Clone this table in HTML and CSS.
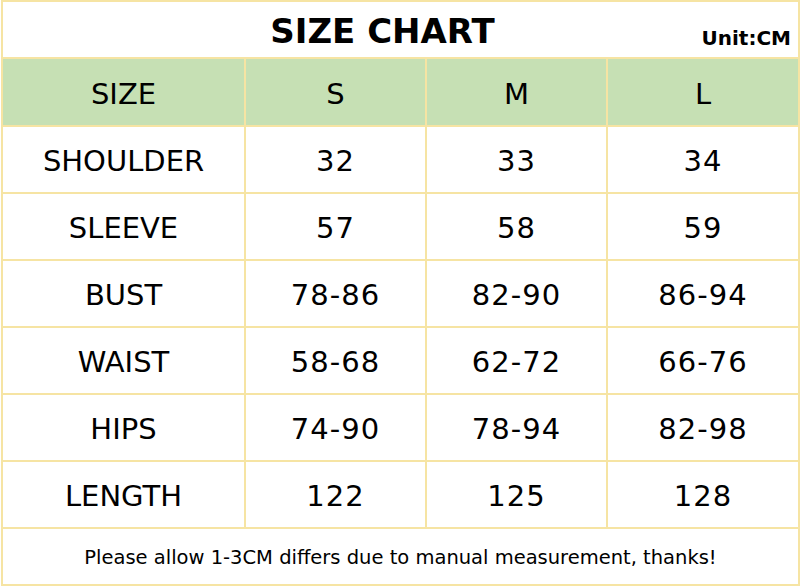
FILE: index.html
```html
<!DOCTYPE html>
<html>
<head>
<meta charset="utf-8">
<link rel="stylesheet" href="styles.css">
</head>
<body>
<div class="chart">
  <div class="cell title-cell"><span class="title">SIZE CHART</span><span class="unit">Unit:CM</span></div>
  <div class="cell head">SIZE</div>
  <div class="cell head">S</div>
  <div class="cell head">M</div>
  <div class="cell head">L</div>

  <div class="cell">SHOULDER</div><div class="cell num">32</div><div class="cell num">33</div><div class="cell num">34</div>
  <div class="cell">SLEEVE</div><div class="cell num">57</div><div class="cell num">58</div><div class="cell num">59</div>
  <div class="cell">BUST</div><div class="cell num">78-86</div><div class="cell num">82-90</div><div class="cell num">86-94</div>
  <div class="cell">WAIST</div><div class="cell num">58-68</div><div class="cell num">62-72</div><div class="cell num">66-76</div>
  <div class="cell">HIPS</div><div class="cell num">74-90</div><div class="cell num">78-94</div><div class="cell num">82-98</div>
  <div class="cell">LENGTH</div><div class="cell num">122</div><div class="cell num">125</div><div class="cell num">128</div>

  <div class="cell foot">Please allow 1-3CM differs due to manual measurement, thanks!</div>
</div>
</body>
</html>
```

FILE: styles.css
```css
html, body {
  margin: 0;
  padding: 0;
  background: #ffffff;
}
body {
  font-family: "DejaVu Sans", sans-serif;
  color: #000;
}
.chart {
  margin-left: 1px;
  width: 799px;
  box-sizing: border-box;
  display: grid;
  grid-template-columns: 241px 179px 179px 190px;
  grid-template-rows: 55px 66px repeat(6, 65px) 55px;
  gap: 2px;
  padding: 2px;
  background: #f6e4a3;
}
.cell {
  background: #fff;
  display: flex;
  align-items: center;
  justify-content: center;
  font-size: 29px;
  line-height: 1;
  padding-top: 4px;
  box-sizing: border-box;
}
.head {
  background: #c6e0b4;
}
.title-cell {
  grid-column: 1 / -1;
  position: relative;
  padding-right: 36px;
  padding-top: 3px;
}
.title {
  font-weight: bold;
  font-size: 34px;
}
.unit {
  position: absolute;
  right: 7px;
  bottom: 9px;
  font-weight: bold;
  font-size: 20px;
}
.num {
  letter-spacing: 1px;
}
.foot {
  grid-column: 1 / -1;
  font-size: 19.5px;
  padding-top: 2px;
}
```
